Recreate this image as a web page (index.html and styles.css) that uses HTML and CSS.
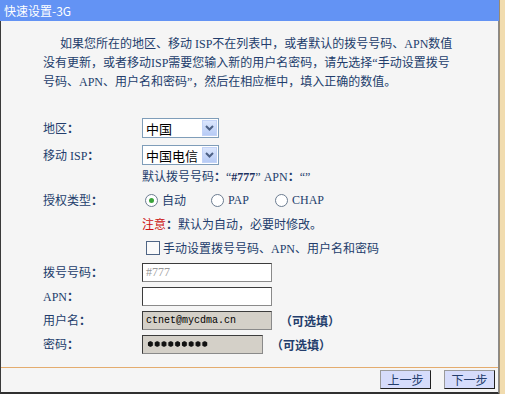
FILE: index.html
```html
<!DOCTYPE html>
<html lang="zh-CN">
<head>
    <meta charset="UTF-8">
    <title>快速设置-3G</title>
    <link rel="stylesheet" href="styles.css">
</head>
<body>
    <div class="window">
        <div class="panel">
            <div class="title">快速设置-3G</div>
            <div class="content">
                <p class="intro">
                    <span class="first">如果您所在的地区、移动 ISP不在列表中，或者默认的拨号号码、APN数值</span><br>
                    没有更新，或者移动ISP需要您输入新的用户名密码，请先选择“手动设置拨号<br>
                    号码、APN、用户名和密码”，然后在相应框中，填入正确的数值。
                </p>
                <div class="form">
                    <div class="row">
                        <span class="label">地区<span class="colon">：</span></span>
                        <div class="select"><span class="value">中国</span><span class="arrow"><svg width="9" height="6" viewBox="0 0 9 6"><path d="M1 1l3.5 3.5L8 1" fill="none" stroke="#4d6185" stroke-width="2"/></svg></span></div>
                    </div>
                    <div class="row row-isp">
                        <span class="label">移动 ISP<span class="colon">：</span></span>
                        <div class="select"><span class="value">中国电信</span><span class="arrow"><svg width="9" height="6" viewBox="0 0 9 6"><path d="M1 1l3.5 3.5L8 1" fill="none" stroke="#4d6185" stroke-width="2"/></svg></span></div>
                    </div>
                    <div class="row">
                        <span class="label"></span>
                        <span>默认拨号号码<span class="colon">：</span>“<b class="num">#777</b>” APN<span class="colon">：</span>“”</span>
                    </div>
                    <div class="row">
                        <span class="label">授权类型<span class="colon">：</span></span>
                        <div class="radios">
                            <span class="radio checked"></span><span class="opt opt-auto">自动</span>
                            <span class="radio"></span><span class="opt opt-pap">PAP</span>
                            <span class="radio"></span><span class="opt">CHAP</span>
                        </div>
                    </div>
                    <div class="row">
                        <span class="label"></span>
                        <span><span class="warn">注意</span><span class="colon">：</span>默认为自动，必要时修改。</span>
                    </div>
                    <div class="row">
                        <span class="label"></span>
                        <span class="check"></span><span>手动设置拨号号码、APN、用户名和密码</span>
                    </div>
                    <div class="row">
                        <span class="label">拨号号码<span class="colon">：</span></span>
                        <div class="field disabled">#777</div>
                    </div>
                    <div class="row">
                        <span class="label">APN<span class="colon">：</span></span>
                        <div class="field"></div>
                    </div>
                    <div class="row">
                        <span class="label">用户名<span class="colon">：</span></span>
                        <div class="field grey">ctnet@mycdma.cn</div>
                        <span class="optional">（可选填）</span>
                    </div>
                    <div class="row">
                        <span class="label">密码<span class="colon">：</span></span>
                        <div class="field grey short"><span class="dots"></span></div>
                        <span class="optional">（可选填）</span>
                    </div>
                </div>
            </div>
            <div class="footer">
                <button class="btn">上一步</button>
                <button class="btn">下一步</button>
            </div>
        </div>
        <div class="edge"></div>
    </div>
</body>
</html>
```

FILE: styles.css
```css
body {
    margin: 0;
    font-family: 'Liberation Serif', 'Noto Sans CJK SC', serif;
    font-size: 12px;
    color: #233d6c;
    background: #f5f5f5;
}
.window {
    display: flex;
    width: 505px;
    height: 394px;
}
.panel {
    width: 498px;
    display: flex;
    flex-direction: column;
    border-left: 1px solid #3a3a3a;
    border-right: 1px solid #8a8a8a;
    border-bottom: 2px solid #303030;
    background: #f5f5f5;
}
.edge {
    width: 5px;
    border-left: 1px solid #9a8a70;
    background: #f1dcaf;
}
.title {
    height: 21px;
    line-height: 21px;
    padding-left: 4px;
    margin-left: -1px;
    margin-right: -3px;
    background: #6393f4;
    color: #fff;
    font-family: 'Noto Sans CJK SC', sans-serif;
    border-right: 2px solid #2a2a2a;
}
.content {
    flex: 1;
}
.intro {
    margin: 14px 0 0 42px;
    line-height: 19px;
    white-space: nowrap;
}
.intro .first {
    padding-left: 17px;
}
.colon {
    display: inline-block;
    width: 12px;
    text-align: center;
    font-family: 'Noto Sans CJK SC', sans-serif;
    font-weight: bold;
}
.form {
    margin: 24px 0 0 42px;
}
.row {
    display: flex;
    align-items: center;
    height: 24px;
}
.row-isp {
    margin-top: 3px;
    margin-bottom: -3px;
}
.label {
    width: 99px;
    flex: none;
}
.select {
    display: flex;
    align-items: center;
    width: 75px;
    height: 18px;
    border: 1px solid #7f9db9;
    background: #fff;
    color: #000;
    font-family: 'Noto Sans CJK SC', sans-serif;
    font-size: 13px;
}
.select .value {
    flex: 1;
    padding-left: 3px;
}
.select .arrow {
    width: 15px;
    height: 16px;
    margin-right: 1px;
    display: flex;
    align-items: center;
    justify-content: center;
    background: linear-gradient(#dbe6fd, #b7cbf5);
    border: 1px solid #c3d3f7;
    box-sizing: border-box;
}
.num {
    color: #1a2f5e;
}
.radios {
    display: flex;
    align-items: center;
}
.radio {
    width: 11px;
    height: 11px;
    border: 1px solid #6b7c90;
    border-radius: 50%;
    background: #fff;
    margin: 0 4px 0 3px;
    position: relative;
}
.radio.checked::after {
    content: "";
    position: absolute;
    left: 3px;
    top: 3px;
    width: 5px;
    height: 5px;
    border-radius: 50%;
    background: #3aa33a;
}
.opt-auto {
    width: 46px;
}
.opt-pap {
    width: 44px;
}
.warn {
    color: #cc1111;
}
.check {
    width: 12px;
    height: 12px;
    border: 1px solid #4f6585;
    background: #fafafa;
    margin: 0 3px 0 4px;
}
.field {
    width: 125px;
    height: 17px;
    line-height: 17px;
    border: 1px solid #3c3c3c;
    border-right-color: #8a8a8a;
    border-bottom-color: #8a8a8a;
    background: #fff;
    padding-left: 3px;
    font-family: 'Liberation Mono', monospace;
    font-size: 10px;
    color: #000;
}
.field.disabled {
    color: #9a9a9a;
    font-family: 'Liberation Serif', serif;
    font-size: 12px;
}
.field.grey {
    background: #d4d0c8;
}
.field.short {
    width: 116px;
    display: flex;
    align-items: center;
}
.dots {
    width: 61px;
    height: 6px;
    margin-left: 1px;
    background: radial-gradient(circle, #111 2.4px, transparent 3px) 0 0 / 6.8px 6px repeat-x;
}
.optional {
    margin-left: 8px;
    font-weight: bold;
    font-family: 'Noto Sans CJK SC', sans-serif;
}
.footer {
    height: 25px;
    border-top: 1px solid #e4ac6e;
    display: flex;
    justify-content: flex-end;
    align-items: flex-start;
    gap: 13px;
    padding: 2px 3px 0 0;
    box-sizing: border-box;
}
.btn {
    width: 51px;
    height: 19px;
    padding: 0;
    background: #d6dcfb;
    border: 1px solid #202020;
    border-top-color: #9a9a9a;
    border-left-color: #9a9a9a;
    color: #233d6c;
    font-family: 'Noto Sans CJK SC', sans-serif;
    font-size: 12px;
    line-height: 16px;
}
```
